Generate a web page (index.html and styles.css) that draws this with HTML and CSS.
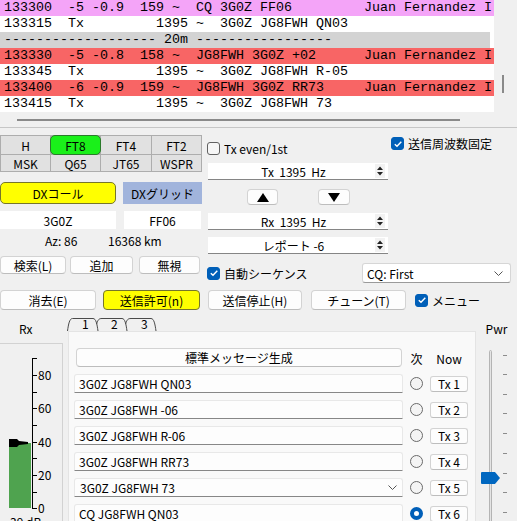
FILE: index.html
```html
<!DOCTYPE html>
<html lang="ja">
<head>
    <meta charset="UTF-8">
    <title>WSJT-X</title>
    <link rel="stylesheet" href="styles.css">
</head>
<body>
    <!-- band activity -->
    <div class="log">
        <div class="log-main">
            <div class="rows">
                <div class="row cq">133300  -5 -0.9  159 ~  CQ 3G0Z FF06         Juan Fernandez I</div>
                <div class="row">133315  Tx         1395 ~  3G0Z JG8FWH QN03</div>
                <div class="row band">------------------- 20m -----------------</div>
                <div class="row me">133330  -5 -0.8  158 ~  JG8FWH 3G0Z +02      Juan Fernandez I</div>
                <div class="row">133345  Tx         1395 ~  3G0Z JG8FWH R-05</div>
                <div class="row me">133400  -6 -0.9  159 ~  JG8FWH 3G0Z RR73     Juan Fernandez I</div>
                <div class="row">133415  Tx         1395 ~  3G0Z JG8FWH 73</div>
            </div>
            <div class="vscroll"><div class="vthumb"></div></div>
        </div>
        <div class="hscroll"><div class="hthumb"></div></div>
    </div>

    <div class="controls">
        <div class="left">
            <div class="modes">
                <div class="mode">H</div>
                <div class="mode on">FT8</div>
                <div class="mode">FT4</div>
                <div class="mode">FT2</div>
                <div class="mode">MSK</div>
                <div class="mode">Q65</div>
                <div class="mode">JT65</div>
                <div class="mode">WSPR</div>
            </div>
            <div class="dx">
                <div class="dx-call">DXコール</div>
                <div class="dx-grid">DXグリッド</div>
            </div>
            <div class="dx-fields">
                <div class="field call">3G0Z</div>
                <div class="field grid">FF06</div>
            </div>
            <div class="az">
                <span class="az-deg">Az: 86</span>
                <span>16368 km</span>
            </div>
            <div class="lookup">
                <button class="btn w66">検索(L)</button>
                <button class="btn w63">追加</button>
                <button class="btn w61">無視</button>
            </div>
        </div>

        <div class="mid">
            <div class="mid-top">
                <label class="check even"><span class="box"></span>Tx even/1st</label>
                <label class="check">
                    <span class="box on"><svg width="10" height="10" viewBox="0 0 10 10"><path d="M1.8 5.2 L4 7.3 L8.3 2.7" fill="none" stroke="#fff" stroke-width="1.4"/></svg></span>送信周波数固定
                </label>
            </div>
            <div class="spin">
                <span class="spin-text">Tx  1395  Hz</span>
                <span class="spin-arrows"><svg width="10" height="14" viewBox="0 0 10 14"><path d="M2 6 L5 2.5 L8 6 Z M2 8 L5 11.5 L8 8 Z" fill="#222"/></svg></span>
            </div>
            <div class="nudge">
                <button class="btn up"><svg width="12" height="9" viewBox="0 0 12 9"><path d="M0 9 L6 0 L12 9 Z" fill="#000"/></svg></button>
                <button class="btn down"><svg width="12" height="9" viewBox="0 0 12 9"><path d="M0 0 L12 0 L6 9 Z" fill="#000"/></svg></button>
            </div>
            <div class="spin rx">
                <span class="spin-text">Rx  1395  Hz</span>
                <span class="spin-arrows"><svg width="10" height="14" viewBox="0 0 10 14"><path d="M2 6 L5 2.5 L8 6 Z M2 8 L5 11.5 L8 8 Z" fill="#222"/></svg></span>
            </div>
            <div class="spin report">
                <span class="spin-text">レポート -6</span>
                <span class="spin-arrows"><svg width="10" height="14" viewBox="0 0 10 14"><path d="M2 6 L5 2.5 L8 6 Z M2 8 L5 11.5 L8 8 Z" fill="#222"/></svg></span>
            </div>
            <div class="mid-bottom">
                <label class="check">
                    <span class="box on"><svg width="10" height="10" viewBox="0 0 10 10"><path d="M1.8 5.2 L4 7.3 L8.3 2.7" fill="none" stroke="#fff" stroke-width="1.4"/></svg></span>自動シーケンス
                </label>
                <div class="combo">
                    <span>CQ: First</span>
                    <svg width="9" height="5" viewBox="0 0 9 5"><path d="M0.5 0.5 L4.5 4.5 L8.5 0.5" fill="none" stroke="#555"/></svg>
                </div>
            </div>
        </div>
    </div>

    <div class="actions">
        <button class="btn w96">消去(E)</button>
        <button class="btn w97 tx-on">送信許可(n)</button>
        <button class="btn w94">送信停止(H)</button>
        <button class="btn w95">チューン(T)</button>
        <label class="check menu">
            <span class="box on"><svg width="10" height="10" viewBox="0 0 10 10"><path d="M1.8 5.2 L4 7.3 L8.3 2.7" fill="none" stroke="#fff" stroke-width="1.4"/></svg></span>メニュー
        </label>
    </div>

    <div class="bottom">
        <div class="rx-col">
            <div class="rx-label">Rx</div>
            <div class="meter">
                <svg width="62" height="178" viewBox="0 0 62 178">
                    <rect x="9" y="100" width="22" height="65" fill="#4fa34f"/>
                    <polygon points="9,96 17,96 19,98 28,99 28,101 19,102 17,104 9,104" fill="#000"/>
                    <g stroke="#000" stroke-width="1">
                        <line x1="32.5" y1="15" x2="32.5" y2="165.5"/>
                        <line x1="32" y1="15.5" x2="37" y2="15.5"/>
                        <line x1="32" y1="32.5" x2="37" y2="32.5"/>
                        <line x1="32" y1="49.5" x2="37" y2="49.5"/>
                        <line x1="32" y1="65.5" x2="37" y2="65.5"/>
                        <line x1="32" y1="82.5" x2="37" y2="82.5"/>
                        <line x1="32" y1="99.5" x2="37" y2="99.5"/>
                        <line x1="32" y1="115.5" x2="37" y2="115.5"/>
                        <line x1="32" y1="132.5" x2="37" y2="132.5"/>
                        <line x1="32" y1="149.5" x2="37" y2="149.5"/>
                        <line x1="32" y1="165.5" x2="37" y2="165.5"/>
                    </g>
                    <g class="scale">
                        <text x="38" y="37">80</text>
                        <text x="38" y="70">60</text>
                        <text x="38" y="104">40</text>
                        <text x="38" y="137">20</text>
                        <text x="38" y="170">0</text>
                        <text x="10" y="184">39 dB</text>
                    </g>
                </svg>
            </div>
        </div>

        <div class="tabs-col">
            <svg class="tabs" width="90" height="18" viewBox="0 0 90 18">
                <g fill="none" stroke="#4a4a4a" stroke-width="1">
                    <path d="M0.5 18 C1.5 11 2.5 5.5 5.5 5.5 L26 5.5 C29 5.5 30 11 31 18"/>
                    <path d="M29.6 11 C31 6.5 32 5.5 35 5.5 L55 5.5 C58 5.5 59 11 60 18"/>
                    <path d="M58.6 11 C60 6.5 61 5.5 64 5.5 L84 5.5 C87 5.5 88 11 89 18"/>
                </g>
                <text x="15" y="15.5">1</text>
                <text x="44" y="16">2</text>
                <text x="74" y="16">3</text>
            </svg>
            <div class="panel">
                <div class="msgs">
                    <button class="btn gen">標準メッセージ生成</button>
                    <div class="head">次</div>
                    <div class="head">Now</div>

                    <div class="msg">3G0Z JG8FWH QN03</div>
                    <span class="radio"></span>
                    <button class="btn txn">Tx 1</button>

                    <div class="msg">3G0Z JG8FWH -06</div>
                    <span class="radio"></span>
                    <button class="btn txn">Tx 2</button>

                    <div class="msg">3G0Z JG8FWH R-06</div>
                    <span class="radio"></span>
                    <button class="btn txn">Tx 3</button>

                    <div class="msg">3G0Z JG8FWH RR73</div>
                    <span class="radio"></span>
                    <button class="btn txn">Tx 4</button>

                    <div class="msg editable">
                        <span>3G0Z JG8FWH 73</span>
                        <svg width="9" height="5" viewBox="0 0 9 5"><path d="M0.5 0.5 L4.5 4.5 L8.5 0.5" fill="none" stroke="#555"/></svg>
                    </div>
                    <span class="radio"></span>
                    <button class="btn txn">Tx 5</button>

                    <div class="msg">CQ JG8FWH QN03</div>
                    <span class="radio on"></span>
                    <button class="btn txn">Tx 6</button>
                </div>
            </div>
        </div>

        <div class="pwr-col">
            <div class="pwr-label">Pwr</div>
            <svg width="41" height="171" viewBox="0 0 41 171">
                <rect x="13.5" y="0.5" width="2" height="180" rx="1" fill="#e4e4e4" stroke="#b4b4b4"/>
                <g stroke="#8c8c8c" stroke-width="1">
                    <line x1="27" y1="5.5" x2="31" y2="5.5"/>
                    <line x1="27" y1="24.5" x2="31" y2="24.5"/>
                    <line x1="27" y1="44.5" x2="31" y2="44.5"/>
                    <line x1="27" y1="63.5" x2="31" y2="63.5"/>
                    <line x1="27" y1="83.5" x2="31" y2="83.5"/>
                    <line x1="27" y1="103.5" x2="31" y2="103.5"/>
                    <line x1="27" y1="123.5" x2="31" y2="123.5"/>
                    <line x1="27" y1="142.5" x2="31" y2="142.5"/>
                    <line x1="27" y1="162.5" x2="31" y2="162.5"/>
                </g>
                <path d="M6 122 L19 122 L24 128 L19 134 L6 134 Q5 134 5 133 L5 123 Q5 122 6 122 Z" fill="#0067c0"/>
            </svg>
        </div>
    </div>
</body>
</html>
```

FILE: styles.css
```css
* {
    box-sizing: border-box;
}

body {
    margin: 0;
    width: 517px;
    height: 521px;
    overflow: hidden;
    background: #f0f0f0;
    font-family: "Noto Sans CJK JP", "Noto Sans", sans-serif;
    font-size: 12px;
    color: #000;
}

button {
    font: inherit;
    color: inherit;
    padding: 0;
    margin: 0;
}

/* decoded messages */
.log {
    height: 128px;
    border-bottom: 1px solid #c6c6c6;
}

.log-main {
    display: flex;
    height: 112px;
}

.rows {
    width: 494px;
    background: #fff;
    font-family: "Liberation Mono", monospace;
    font-size: 13.33px;
    line-height: 16px;
    overflow: hidden;
}

.row {
    height: 16px;
    padding-left: 4px;
    white-space: pre;
    overflow: hidden;
}

.row.cq {
    background: #f4a4f8;
}

.row.me {
    background: #f86565;
}

.row.band {
    width: 490px;
    background: #d3d3d3;
}

.vscroll {
    flex: 1;
}

.vthumb {
    width: 2px;
    height: 18px;
    margin: 75px 0 0 8px;
    background: #8a8a8a;
}

.hscroll {
    height: 15px;
    padding: 7px 0 0 17px;
}

.hthumb {
    width: 443px;
    height: 2px;
    background: #8a8a8a;
}

/* generic widgets */
.btn {
    display: flex;
    align-items: center;
    justify-content: center;
    background: #fdfdfd;
    border: 1px solid #d3d3d3;
    border-bottom-color: #bdbdbd;
    border-radius: 4px;
    white-space: nowrap;
}

.check {
    display: flex;
    align-items: center;
    gap: 4px;
    white-space: nowrap;
    line-height: 13px;
}

.box {
    width: 13px;
    height: 13px;
    flex: none;
    border: 1px solid #616161;
    border-radius: 3px;
    background: #f6f6f6;
}

.box.on {
    display: flex;
    align-items: center;
    justify-content: center;
    border-color: #005fb8;
    background: #005fb8;
}

.controls {
    display: flex;
    height: 155px;
}

/* left block: modes and DX station */
.left {
    width: 202px;
}

.modes {
    display: grid;
    grid-template-columns: 49px 49px 50px 49px;
    grid-template-rows: 18px 16px;
    gap: 1px;
    margin-top: 7px;
    border: 1px solid #adadad;
    background: #adadad;
}

.mode {
    display: flex;
    align-items: center;
    justify-content: center;
    background: #e1e1e1;
}

.mode.on {
    margin: -1px;
    background: #1af01a;
    border: 1px solid #2b7a2b;
    border-radius: 5px;
}

.dx {
    display: flex;
    height: 22px;
    margin-top: 10px;
}

.dx-call,
.dx-grid {
    display: flex;
    align-items: center;
    justify-content: center;
}

.dx-call {
    width: 116px;
    background: #ffff00;
    border: 1px solid #76762a;
    border-radius: 5px;
}

.dx-grid {
    width: 79px;
    margin-left: 7px;
    background: #a1b4dc;
}

.dx-fields {
    display: flex;
    height: 18px;
    margin-top: 7px;
}

.field {
    display: flex;
    align-items: center;
    justify-content: center;
    background: #fff;
}

.field.call {
    width: 116px;
}

.field.grid {
    width: 77px;
    margin-left: 8px;
}

.az {
    display: flex;
    height: 14px;
    margin-top: 5px;
    padding-left: 45px;
    line-height: 14px;
}

.az-deg {
    width: 63px;
}

.lookup {
    display: flex;
    height: 18px;
    margin-top: 8px;
}

.w66 { width: 66px; }
.w63 { width: 63px; margin-left: 4px; }
.w61 { width: 61px; margin-left: 6px; }

/* middle block: frequencies and sequencing */
.mid {
    width: 310px;
    margin-left: 5px;
}

.mid-top {
    display: flex;
    align-items: flex-start;
    margin-top: 9px;
}

.check.even {
    width: 184px;
    margin-top: 5px;
}

.spin {
    display: flex;
    align-items: center;
    width: 180px;
    height: 17px;
    margin: 8px 0 0 1px;
    background: #fff;
    border-bottom: 1px solid #858585;
}

.spin.rx {
    margin-top: 8px;
}

.spin.report {
    margin-top: 7px;
}

.spin-text {
    flex: 1;
    text-align: center;
    white-space: pre;
    padding-left: 4px;
}

.spin-arrows {
    display: flex;
    width: 10px;
    margin-right: 3px;
    background: #f2f2f2;
}

.nudge {
    display: flex;
    height: 16px;
    margin-top: 9px;
    padding-left: 40px;
}

.btn.up {
    width: 31px;
}

.btn.down {
    width: 32px;
    margin-left: 40px;
}

.mid-bottom {
    display: flex;
    align-items: center;
    height: 20px;
    margin-top: 9px;
}

.combo {
    display: flex;
    align-items: center;
    justify-content: space-between;
    width: 149px;
    height: 20px;
    margin: 0 6px 0 auto;
    padding: 0 7px 0 4px;
    background: #fff;
    border: 1px solid #d6d6d6;
    border-bottom-color: #9a9a9a;
    border-radius: 3px;
}

/* transmit buttons */
.actions {
    display: flex;
    align-items: center;
    height: 20px;
    margin-top: 7px;
}

.actions .btn {
    height: 20px;
}

.w96 { width: 96px; }
.w97 { width: 97px; margin-left: 7px; }
.w94 { width: 94px; margin-left: 8px; }
.w95 { width: 95px; margin-left: 9px; }

.btn.tx-on {
    background: #ffff00;
    border-color: #76762a;
}

.check.menu {
    margin-left: 9px;
}

/* bottom: meter, message tabs, power */
.bottom {
    display: flex;
    height: 203px;
    margin-top: 8px;
}

.rx-col {
    width: 67px;
}

.rx-label {
    height: 25px;
    padding-left: 19px;
    line-height: 22px;
}

.meter {
    width: 63px;
    height: 178px;
    border-top: 1px solid #d2d2d2;
    border-right: 1px solid #d2d2d2;
}

.meter svg {
    display: block;
    margin-top: -1px;
}

.scale {
    font-size: 12px;
}

.tabs-col {
    width: 409px;
}

.tabs {
    display: block;
    margin-top: -5px;
    font-size: 12px;
}

.panel {
    height: 190px;
    margin-left: 1px;
    padding: 16px 0 0 5px;
    background: #f9f9f9;
    border: 1px solid #e4e4e4;
    border-bottom: none;
}

.msgs {
    display: grid;
    grid-template-columns: 329px 13px 38px;
    grid-auto-rows: 19px;
    column-gap: 7px;
    row-gap: 7px;
    align-items: center;
}

.btn.gen {
    height: 19px;
    margin: 0 1px 0 2px;
}

.head {
    text-align: center;
    white-space: nowrap;
}

.gen,
.head {
    margin-bottom: -1px;
}

.msgs > .msg:first-of-type {
    margin-top: 1px;
}

.msg {
    display: flex;
    align-items: center;
    height: 19px;
    padding-left: 4px;
    background: #fdfdfd;
    border: 1px solid #e8e8e8;
    border-bottom-color: #878787;
    border-radius: 3px 3px 0 0;
}

.msg.editable {
    justify-content: space-between;
    padding: 0 5px 0 5px;
}

.radio {
    width: 13px;
    height: 13px;
    border: 1px solid #6a6a6a;
    border-radius: 50%;
    background: #f4f4f4;
}

.radio.on {
    border: 4px solid #005fb8;
    background: #fff;
}

.btn.txn {
    height: 16px;
    border-radius: 3px;
}

.pwr-col {
    width: 41px;
}

.pwr-label {
    height: 32px;
    text-align: center;
    line-height: 22px;
}

.pwr-col svg {
    display: block;
}
```
